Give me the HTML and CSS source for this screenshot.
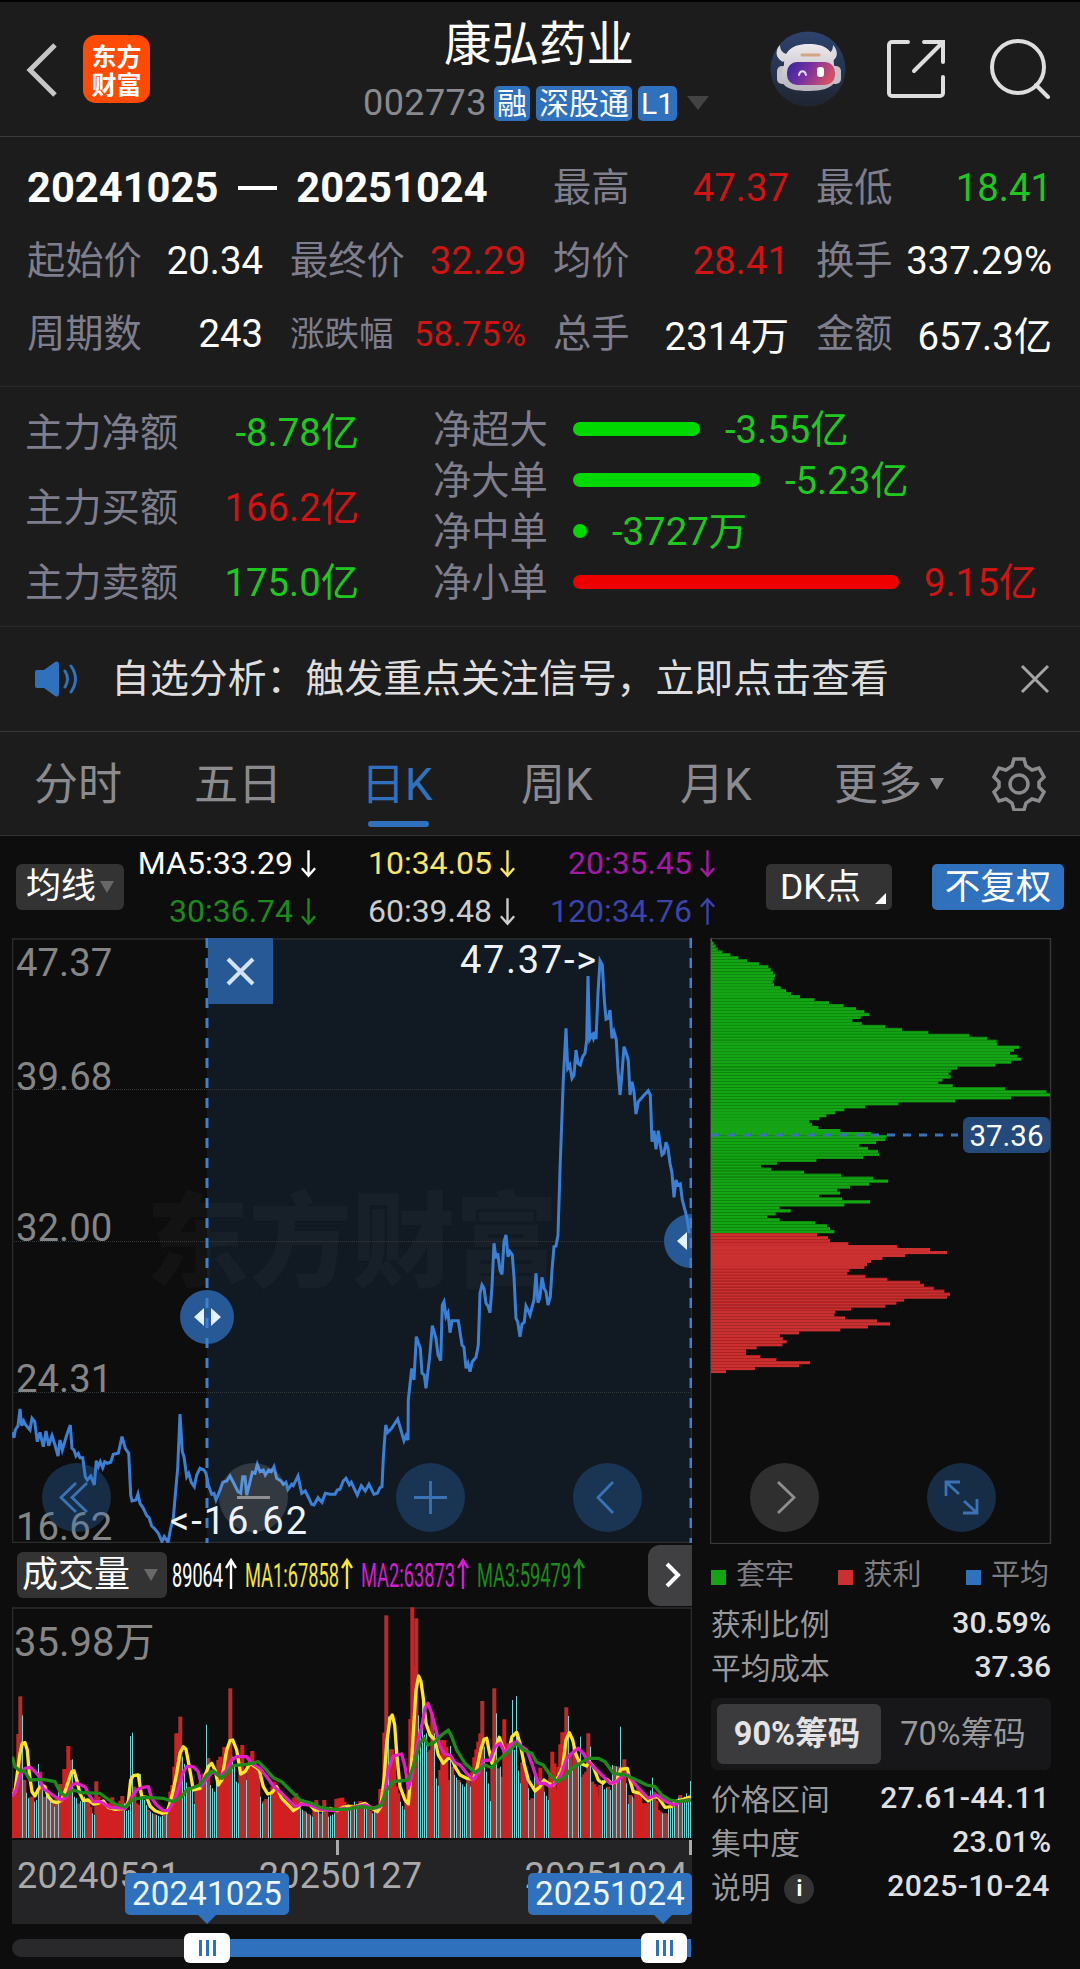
FILE: index.html
```
<!DOCTYPE html>
<html lang="zh-CN">
<head>
  <meta charset="UTF-8">
  <meta name="viewport" content="width=device-width, initial-scale=1.0">
  <title>康弘药业 002773</title>
  <link rel="stylesheet" href="styles.css">
</head>
<body>
  <svg class="sprite" aria-hidden="true">
    <symbol id="down" viewBox="0 0 18 30"><path d="M9 1v27M2 20l7 8 7-8" /></symbol>
    <symbol id="up" viewBox="0 0 18 30"><path d="M9 29V2M2 10l7-8 7 8" /></symbol>
  </svg>

  <header class="header">
    <svg class="back" viewBox="0 0 32 56"><path d="M29 3L4 28l25 25" /></svg>
    <div class="logo"><span>东方</span><span>财富</span></div>
    <div class="title">
      <h1>康弘药业</h1>
      <div class="code">
        <span>002773</span><b>融</b><b>深股通</b><b>L1</b><i class="caret"></i>
      </div>
    </div>
    <div class="actions">
      <svg class="robot" width="76" height="76" viewBox="0 0 76 76">
        <defs>
          <linearGradient id="sky" x1="0" y1="0" x2="0" y2="1"><stop offset="0" stop-color="#2e436d" /><stop offset="1" stop-color="#1f2530" /></linearGradient>
          <linearGradient id="visor" x1="0" y1="0" x2="1" y2="0.3"><stop offset="0" stop-color="#2c2a9c" /><stop offset="0.5" stop-color="#7a2fa0" /><stop offset="1" stop-color="#d05068" /></linearGradient>
          <linearGradient id="shell" x1="0" y1="0" x2="0" y2="1"><stop offset="0" stop-color="#ece9ec" /><stop offset="1" stop-color="#b9b4bd" /></linearGradient>
        </defs>
        <circle cx="38" cy="38" r="37.5" fill="url(#sky)" />
        <path class="horns" d="M10 14c-5 5-5 13 3 17l8-8c-7 1-11-3-11-9zM63 14c5 5 6 13-2 17l-9-8c8 1 11-3 11-9z" />
        <rect x="7" y="35" width="11" height="18" rx="5" fill="#c5c1ca" />
        <rect x="59" y="35" width="12" height="18" rx="5" fill="#c5c1ca" />
        <path class="helmet" d="M14 34c0-15 9-21 25-21s25 6 25 21c6 14 2 26-25 26S8 52 14 34z" />
        <rect x="17" y="31" width="48" height="23" rx="10" fill="url(#visor)" />
        <path d="M32 24h17" stroke="#d5a583" stroke-width="3" stroke-linecap="round" />
        <path d="M29 44c1-5 6-5 7 0" stroke="#e2dcff" stroke-width="2" stroke-linecap="round" />
        <rect x="47" y="36" width="7" height="10" rx="3" fill="#fff" />
      </svg>
      <svg class="line-icon" width="58" height="58" viewBox="0 0 58 58"><path d="M21 2H5a3 3 0 0 0-3 3v48a3 3 0 0 0 3 3h48a3 3 0 0 0 3-3V37M37 2h19v20M55 3L27 31" /></svg>
      <svg class="line-icon" width="60" height="60" viewBox="0 0 60 60"><circle cx="28" cy="28" r="26" /><path d="M46 46l12 12" /></svg>
    </div>
  </header>

  <section class="stats">
    <div class="range"><span>20241025</span><i></i><span>20251024</span></div>
    <div><label>最高</label><span class="red">47.37</span></div>
    <div><label>最低</label><span class="green">18.41</span></div>
    <div><label>起始价</label><span>20.34</span></div>
    <div><label>最终价</label><span class="red">32.29</span></div>
    <div><label>均价</label><span class="red">28.41</span></div>
    <div><label>换手</label><span>337.29%</span></div>
    <div><label>周期数</label><span>243</span></div>
    <div class="small"><label>涨跌幅</label><span class="red">58.75%</span></div>
    <div><label>总手</label><span>2314万</span></div>
    <div><label>金额</label><span>657.3亿</span></div>
  </section>

  <section class="flow">
    <div class="main-force">
      <div><label>主力净额</label><span class="green">-8.78亿</span></div>
      <div><label>主力买额</label><span class="red">166.2亿</span></div>
      <div><label>主力卖额</label><span class="green">175.0亿</span></div>
    </div>
    <div class="orders">
      <div><label>净超大</label><i class="bar bg-green" style="width:127px"></i><span class="green">-3.55亿</span></div>
      <div><label>净大单</label><i class="bar bg-green" style="width:187px"></i><span class="green">-5.23亿</span></div>
      <div><label>净中单</label><i class="bar bg-green" style="width:14px"></i><span class="green">-3727万</span></div>
      <div><label>净小单</label><i class="bar bg-red" style="width:326px"></i><span class="red">9.15亿</span></div>
    </div>
  </section>

  <section class="notice">
    <svg class="horn" width="46" height="36" viewBox="0 0 46 36"><path d="M1 11q0-2 2-2h7L21 1q4-2 4 3v28q0 5-4 3l-11-8H3q-2 0-2-2z" /><path class="wave" d="M31 10q5 8 0 16M37 5q9 13 0 26" /></svg>
    <p>自选分析：触发重点关注信号，立即点击查看</p>
    <svg class="close" width="30" height="30" viewBox="0 0 30 30"><path d="M2 2l26 26M28 2L2 28" /></svg>
  </section>

  <nav class="tabs">
    <a>分时</a><a>五日</a><a class="active">日K</a><a>周K</a><a>月K</a><a class="more">更多<i class="caret"></i></a>
    <svg class="gear" width="54" height="54" viewBox="0 0 54 54"><path d="M22 2h10l2 7 6 4 7-2 5 9-5 5v5l5 5-5 9-7-2-6 4-2 7H22l-2-7-6-4-7 2-5-9 5-5v-5l-5-5 5-9 7 2 6-4z" /><circle cx="27" cy="27" r="9" /></svg>
  </nav>

  <div class="ma">
    <button class="pick">均线<i class="caret"></i></button>
    <div class="ma-values">
      <span class="white">MA5:33.29<svg><use href="#down" /></svg></span>
      <span class="yellow">10:34.05<svg><use href="#down" /></svg></span>
      <span class="purple">20:35.45<svg><use href="#down" /></svg></span>
      <span class="dgreen">30:36.74<svg><use href="#down" /></svg></span>
      <span class="gray">60:39.48<svg><use href="#down" /></svg></span>
      <span class="indigo">120:34.76<svg><use href="#up" /></svg></span>
    </div>
    <button class="dk">DK点<i></i></button>
    <button class="adjust">不复权</button>
  </div>

  <main class="charts">
    <div class="left">
      <svg class="price" width="680" height="605" viewBox="12 938 680 605">
        <rect class="selected" x="207" y="938" width="485" height="605" />
        <text class="watermark" x="146" y="1279">东方财富</text>
        <path class="grid" d="M12 1089.5h680M12 1241.5h680M12 1392.5h680" />
        <path class="frame" d="M12.5 938v605M12 939h680M12 1542.5h680M691.5 938v605" />
        <g class="scale">
          <text x="16" y="976">47.37</text>
          <text x="16" y="1090">39.68</text>
          <text x="16" y="1241">32.00</text>
          <text x="16" y="1392">24.31</text>
          <text x="16" y="1540">16.62</text>
        </g>
        <circle class="handle" cx="207" cy="1317" r="27" />
        <circle class="handle" cx="691" cy="1241" r="27" />
        <polyline class="close-line" id="closeLine" />
        <path class="edge" d="M207 938v605M691 938v605" />
        <path class="tri" d="M204 1308l-10 9 10 9zM211 1308l10 9-10 9zM687 1232l-10 9 10 9z" />
        <g class="mark">
          <text x="460" y="973" textLength="136">47.37-&gt;</text>
          <text x="170" y="1534" textLength="137">&lt;-16.62</text>
        </g>
        <rect class="shut" x="208" y="938" width="65" height="66" />
        <path class="shut-x" d="M228 959l25 25M253 959l-25 25" />
        <g class="round blue">
          <circle cx="76.5" cy="1497.5" r="34.5" /><path d="M76 1483l-15 14.500 15 14.500M87 1483l-15 14.500 15 14.500" />
          <circle cx="430.500" cy="1497.500" r="34.500" /><path d="M414 1497.500h33M430.500 1481v33" />
          <circle cx="607.500" cy="1497.500" r="34.500" /><path d="M613 1482l-15 15.500 15 15.500" />
        </g>
        <g class="round plain">
          <circle cx="253.500" cy="1497.500" r="34.500" /><path d="M237 1497.500h33" />
        </g>
      </svg>

      <div class="volume-bar">
        <button class="pick">成交量<i class="caret"></i></button>
        <svg class="volume-values" width="416" height="40" viewBox="170 0 416 40">
          <text class="white" x="172" y="32" textLength="51" lengthAdjust="spacingAndGlyphs">89064</text>
          <text class="vivid" x="245" y="32" textLength="94" lengthAdjust="spacingAndGlyphs">MA1:67858</text>
          <text class="magenta" x="361" y="32" textLength="94" lengthAdjust="spacingAndGlyphs">MA2:63873</text>
          <text class="dgreen" x="477" y="32" textLength="94" lengthAdjust="spacingAndGlyphs">MA3:59479</text>
          <path class="white" d="M231 34V5M226 13l5-8 5 8" />
          <path class="vivid" d="M347 34V5M342 13l5-8 5 8" />
          <path class="magenta" d="M463 34V5M458 13l5-8 5 8" />
          <path class="dgreen" d="M579 34V5M574 13l5-8 5 8" />
        </svg>
        <button class="next"><svg width="18" height="28" viewBox="0 0 18 28"><path d="M3 3l11 11L3 25" /></svg></button>
      </div>

      <svg class="volume" width="680" height="233" viewBox="12 1607 680 233">
        <path class="frame" d="M12.500 1607v232M12 1608h680M691.500 1607v232" />
        <g id="volumeBars"></g>
        <g id="volumeLines" class="avg"></g>
        <text class="max" x="14" y="1656">35.98万</text>
      </svg>

      <div class="axis">
        <span>20240531</span><span class="center">20250127</span><span>20251024</span>
        <i class="tick mid"></i><i class="tick last"></i>
        <b class="flag from">20241025</b>
        <b class="flag to">20251024</b>
      </div>

      <div class="slider">
        <div class="fill"></div>
        <div class="knob start"><i></i><i></i><i></i></div>
        <div class="knob end"><i></i><i></i><i></i></div>
      </div>
    </div>

    <aside class="right">
      <svg class="chips" width="342" height="606" viewBox="710 938 342 606">
        <rect class="frame" x="710.500" y="938.500" width="340" height="605" />
        <g id="chipBars"></g>
        <path class="avg-line" d="M711 1135h247" />
        <rect class="avg-tag" x="963" y="1117" width="87" height="36" rx="6" />
        <text class="avg-text" x="1006.500" y="1146">37.36</text>
        <g class="round plain"><circle cx="784.500" cy="1497.500" r="34.500" /><path d="M778 1482l16 15.500-16 15.500" /></g>
        <g class="round blue"><circle cx="961.500" cy="1497.500" r="34.500" /><path d="M946 1496v-14h14M947 1483l12 11M977 1499v14h-14M976 1512l-12-11" /></g>
      </svg>
      <div class="legend">
        <span><i class="c1"></i>套牢</span><span><i class="c2"></i>获利</span><span><i class="c3"></i>平均</span>
      </div>
      <div class="row"><label>获利比例</label><b>30.59%</b></div>
      <div class="row"><label>平均成本</label><b>37.36</b></div>
      <div class="segment"><b>90%筹码</b><span>70%筹码</span></div>
      <div class="row"><label>价格区间</label><b class="wide">27.61-44.11</b></div>
      <div class="row"><label>集中度</label><b>23.01%</b></div>
      <div class="row"><label>说明<i class="info">i</i></label><b class="wide">2025-10-24</b></div>
    </aside>
  </main>
  <script src="script.js"></script>
</body>
</html>
```
FILE: styles.css
```
* {
  box-sizing: border-box;
}
body {
  margin: 0;
  width: 1080px;
  height: 1969px;
  overflow: hidden;
  background: #0d0d0d;
  color: #fff;
  font-family: Roboto, "Noto Sans CJK SC", sans-serif;
  border-top: 2px solid #000;
}
h1, p {
  margin: 0;
  font-weight: 400;
}
button {
  border: none;
  padding: 0;
  color: #fff;
  font-family: inherit;
}
i, b {
  font-style: normal;
}
path, polyline {
  fill: none;
}
.sprite {
  display: none;
}
.red { color: #d01414; }
.green { color: #1fc81f; }
.white { color: #fff; }
.yellow { color: #f8e767; }
.vivid { color: #f3e53a; }
.purple { color: #a51aa5; }
.magenta { color: #d21ed2; }
.dgreen { color: #1c8a1c; }
.gray { color: #ccc; }
.indigo { color: #3a44ac; }
.bg-green { background: #00d900; }
.bg-red { background: #ee0000; }
.caret {
  display: inline-block;
  border: 7px solid transparent;
  border-top: 12px solid #686868;
  border-bottom: 0;
}

/* header */
.header {
  height: 135px;
  display: flex;
  align-items: flex-start;
  background: #1c1c1c;
  border-bottom: 1px solid #3a3a3a;
  padding: 0 30px 0 26px;
}
.back {
  width: 32px;
  height: 56px;
  margin-top: 40px;
  stroke: #c6c6c6;
  stroke-width: 5;
}
.logo {
  width: 67px;
  height: 68px;
  margin: 33px 0 0 25px;
  border-radius: 13px;
  background: #ff4b06;
  display: flex;
  flex-direction: column;
  align-items: center;
  justify-content: center;
  font: 700 25px/28px "Noto Sans CJK SC", sans-serif;
}
.title {
  width: 350px;
  margin-left: 213px;
}
.title h1 {
  font-size: 47.5px;
  line-height: 60px;
  margin-top: 13px;
  padding-left: 81px;
}
.code {
  display: flex;
  align-items: center;
  height: 36px;
  margin-top: 10px;
  color: #8a8a8e;
  font-size: 36px;
}
.code span {
  width: 131px;
  letter-spacing: 0.4px;
}
.code b {
  font-weight: 400;
  font-size: 30px;
  line-height: 35px;
  color: #fff;
  background: #3071bd;
  border-radius: 5px;
  padding: 0 3px;
  margin-right: 6px;
}
.code .caret {
  margin-left: 4px;
  border-width: 14px 11px 0;
  border-top-color: #434343;
}
.actions {
  display: flex;
  align-items: center;
  margin: 29px 0 0 auto;
  gap: 41px;
}
.horns {
  fill: #dcd9df;
}
.helmet {
  fill: url(#shell);
}
.line-icon {
  fill: none;
  stroke: #dedede;
  stroke-width: 4;
  stroke-linecap: round;
}
.line-icon:last-child {
  margin-left: 4px;
}

/* period statistics */
.stats {
  height: 249px;
  background: #1c1c1c;
  display: grid;
  grid-template-columns: repeat(4, 236px);
  grid-auto-rows: 73px;
  column-gap: 27px;
  padding: 14px 27px 0;
  font-size: 38.3px;
}
.stats div {
  display: flex;
  justify-content: space-between;
  align-items: center;
  white-space: nowrap;
}
.stats .range {
  grid-column: span 2;
  justify-content: flex-start;
  font-size: 41.7px;
  font-weight: 700;
}
.range i {
  width: 39px;
  height: 4px;
  margin: 0 19px 0 20px;
  background: #fff;
}
.stats .small {
  font-size: 34.5px;
}
label {
  color: #7f7e8c;
}
.stats label {
  margin-top: -6px;
}

/* money flow */
.flow {
  height: 241px;
  background: #1c1c1c;
  border-top: 1px solid #2a2a2a;
  border-bottom: 1px solid #2a2a2a;
  display: flex;
  padding-left: 25px;
  font-size: 38.3px;
}
.main-force {
  width: 334px;
  padding-top: 5px;
}
.main-force div {
  height: 75px;
  display: flex;
  align-items: center;
  justify-content: space-between;
}
.orders {
  margin-left: 74px;
  padding-top: 16px;
}
.orders div {
  height: 51px;
  display: flex;
  align-items: center;
}
.orders label {
  width: 140px;
}
.orders label, .orders span {
  margin-top: -4px;
}
.bar {
  height: 14px;
  border-radius: 7px;
  margin-right: 25px;
}

/* notice */
.notice {
  height: 105px;
  background: #1c1c1c;
  display: flex;
  align-items: center;
  padding: 0 30px 0 34px;
  border-bottom: 1px solid #383838;
}
.notice p {
  margin: -8px 0 0 31px;
  font-size: 38.9px;
  color: #dedede;
  white-space: nowrap;
}
.horn path {
  fill: #3071bd;
}
.horn .wave {
  fill: none;
  stroke: #3071bd;
  stroke-width: 3;
  stroke-linecap: round;
}
.close {
  margin-left: auto;
  stroke: #a5a5a5;
  stroke-width: 3;
}

/* tabs */
.tabs {
  height: 104px;
  background: #1c1c1c;
  border-bottom: 1px solid #333;
  display: flex;
  align-items: center;
  padding: 0 34px;
  font-size: 44px;
  color: #8b8b8f;
}
.tabs a {
  width: 160px;
  padding-top: 3px;
  line-height: 100px;
  white-space: nowrap;
}
.tabs .active {
  color: #3071bd;
  position: relative;
  padding-left: 7px;
}
.tabs .active::after {
  content: "";
  position: absolute;
  left: 14px;
  bottom: 8px;
  width: 61px;
  height: 6px;
  border-radius: 3px;
  background: #3071bd;
}
.tabs a:nth-child(4) {
  padding-left: 7px;
}
.tabs a:nth-child(5) {
  padding-left: 6px;
}
.tabs .more {
  width: auto;
}
.more .caret {
  margin: 0 0 10px 8px;
  border-width: 12px 7px 0;
  border-top-color: #8b8b8f;
}
.gear {
  margin-left: auto;
  fill: none;
  stroke: #8b8b8f;
  stroke-width: 3.5;
}

/* moving averages */
.ma {
  height: 102px;
  display: flex;
  align-items: center;
  padding-left: 16px;
}
.pick {
  height: 46px;
  width: 108px;
  background: #333;
  border-radius: 6px;
  font-size: 35px;
  line-height: 44px;
  display: flex;
  align-items: center;
  justify-content: center;
  gap: 4px;
}
.ma-values {
  display: grid;
  grid-template-columns: 193px 199px 200px;
  grid-auto-rows: 48px;
  font-size: 32px;
}
.ma-values span {
  display: flex;
  align-items: center;
  justify-content: flex-end;
}
.ma-values svg {
  width: 17px;
  height: 29px;
  margin-left: 7px;
  stroke: currentColor;
  stroke-width: 2.5;
}
.dk, .adjust {
  height: 46px;
  border-radius: 5px;
  line-height: 44px;
}
.dk {
  width: 126px;
  margin-left: 50px;
  background: #333;
  padding-right: 17px;
  font-size: 35.5px;
  position: relative;
}
.dk i {
  position: absolute;
  right: 6px;
  bottom: 6px;
  border-left: 11px solid transparent;
  border-bottom: 11px solid #fff;
}
.adjust {
  width: 132px;
  margin-left: 40px;
  background: #3071bd;
  font-size: 35.5px;
}

/* charts */
.charts {
  display: flex;
  padding-left: 12px;
  gap: 18px;
}
.left {
  width: 680px;
}
.right {
  width: 342px;
}
.charts svg {
  display: block;
}
.frame {
  fill: none;
  stroke: #2b2c2e;
  stroke-width: 1.5;
}
.chips .frame {
  stroke: #363636;
}
.selected {
  fill: #111922;
}
.watermark {
  font-size: 103px;
  font-weight: 900;
  fill: rgba(255, 255, 255, 0.028);
}
.grid {
  stroke: #33383d;
  stroke-dasharray: 1 1;
}
.scale {
  font-size: 38.3px;
  fill: #858585;
}
.handle {
  fill: #275997;
}
.close-line {
  stroke: #3c80d6;
  stroke-width: 3;
}
.edge {
  stroke: #3f7fcc;
  stroke-width: 3;
  stroke-dasharray: 10 10;
}
.tri {
  fill: #e4f1ff;
}
.mark {
  font-size: 38px;
  fill: #edf2fb;
}
.shut {
  fill: #275997;
}
.shut-x {
  stroke: #d3e2f6;
  stroke-width: 4;
}
.round path {
  stroke-width: 2.8;
}
.blue circle {
  fill: rgba(48, 113, 189, 0.32);
}
.blue path {
  stroke: #3a73b5;
}
.plain circle {
  fill: rgba(255, 255, 255, 0.14);
}
.plain path {
  stroke: #8f8f92;
}

/* volume */
.volume-bar {
  height: 64px;
  display: flex;
  align-items: center;
  padding-left: 5px;
}
.volume-bar .pick {
  width: 150px;
  font-size: 36px;
  gap: 14px;
  padding-right: 4px;
}
.volume-values {
  margin-left: 3px;
  font-size: 33px;
}
.volume-values text {
  fill: currentColor;
}
.volume-values path {
  stroke: currentColor;
  stroke-width: 2.4;
}
.next {
  width: 44px;
  height: 61px;
  margin-left: auto;
  padding-left: 16px;
  background: #404042;
  border-radius: 12px 0 0 12px;
}
.next path {
  stroke: #fff;
  stroke-width: 4;
}
.max {
  font-size: 40px;
  fill: #858585;
}
.up { fill: #d22020; }
.up-edge { fill: #b03030; }
.fall { fill: #70d6d6; }
.avg polyline {
  stroke-width: 3.3;
  stroke-linejoin: round;
}
.axis {
  position: relative;
  height: 84px;
  background: #242426;
  display: flex;
  justify-content: space-between;
  padding: 15px 4px 0 5px;
  font-size: 36px;
  letter-spacing: 0.2px;
  color: #aaa;
}
.axis .center {
  margin-right: 24px;
}
.tick {
  position: absolute;
  top: 0;
  width: 3px;
  height: 15px;
  background: #aaa;
}
.tick.mid {
  left: 324px;
}
.tick.last {
  right: 0;
}
.flag {
  position: absolute;
  top: 33px;
  width: 164px;
  height: 42px;
  border-radius: 5px;
  background: #3071bd;
  color: #eef6ff;
  font-size: 33px;
  font-weight: 400;
  line-height: 41px;
  text-align: center;
}
.flag::after {
  content: "";
  position: absolute;
  top: 42px;
  left: 73px;
  border: 9px solid transparent;
  border-top-color: #3071bd;
  border-bottom: 0;
}
.from {
  left: 113px;
}
.to {
  right: 0;
}
.to::after {
  left: 126px;
}
.slider {
  position: relative;
  height: 18px;
  margin-top: 15px;
  border-radius: 9px;
  background: #29292b;
}
.fill {
  height: 18px;
  margin: 0 1px 0 195px;
  background: #3071bd;
}
.knob {
  position: absolute;
  top: -6px;
  width: 46px;
  height: 30px;
  border-radius: 6px;
  background: #fff;
  display: flex;
  align-items: center;
  justify-content: center;
  gap: 4px;
}
.knob i {
  width: 3px;
  height: 16px;
  background: #3071bd;
}
.start {
  left: 172px;
}
.end {
  left: 629px;
}

/* chip distribution */
.trapped { fill: #14a514; }
.trapped-line { fill: #0c860c; }
.profit { fill: #ca3030; }
.profit-line { fill: #ad2020; }
.avg-line {
  stroke: #3a73b5;
  stroke-width: 3;
  stroke-dasharray: 8 8;
}
.avg-tag {
  fill: #234a7a;
}
.avg-text {
  font-size: 29.5px;
  fill: #fff;
  text-anchor: middle;
}
.legend {
  height: 56px;
  padding: 0 3px 0 1px;
  display: flex;
  justify-content: space-between;
  align-items: center;
  font-size: 29px;
  color: #7e7e82;
}
.legend i {
  display: inline-block;
  width: 15px;
  height: 15px;
  margin-right: 10px;
}
.c1 { background: #14a514; }
.c2 { background: #ca3030; }
.c3 { background: #3071bd; }
.row {
  height: 44px;
  display: flex;
  justify-content: space-between;
  align-items: center;
  padding: 0 1px;
  font-size: 30px;
}
.row label {
  font-size: 29.7px;
  color: #99999c;
}
.row b {
  font-weight: 500;
  color: #e0e0e0;
}
.row .wide {
  letter-spacing: 0.6px;
}
.row .wide:nth-child(2) {
  margin-right: 1px;
}
.segment {
  height: 72px;
  margin: 10px 1px 5px;
  padding: 6px;
  display: flex;
  border-radius: 6px;
  background: #171719;
  font-size: 32.5px;
  line-height: 60px;
  text-align: center;
}
.segment b {
  width: 164px;
  padding-right: 4px;
  border-radius: 6px;
  background: #3b3b3d;
  color: #e4e4e4;
}
.segment span {
  flex: 1;
  color: #99999c;
}
.info {
  display: inline-block;
  width: 30px;
  height: 30px;
  margin-left: 14px;
  border-radius: 50%;
  background: #333;
  color: #fff;
  font-size: 22px;
  font-weight: 700;
  line-height: 30px;
  text-align: center;
  vertical-align: 2px;
}
```
FILE: script.js
```
const SVG = 'http://www.w3.org/2000/svg';

function add(parent, name, attrs) {
  const el = document.createElementNS(SVG, name);
  for (const key in attrs) el.setAttribute(key, attrs[key]);
  parent.appendChild(el);
  return el;
}

// "x,y x,y" in thirds of a pixel, moved to the chart's origin
function toPoints(text, x0, y0) {
  return text.split(' ').map((pair) => {
    const [x, y] = pair.split(',').map(Number);
    return (x0 + x / 3).toFixed(1) + ',' + (y0 + y / 3).toFixed(1);
  }).join(' ');
}

// Closing price
const closeA = '37,112 42,128 46,105 54,92 60,42 65,92 71,78 77,90 90,105 96,70 104,80 112,140 120,112 130,155 138,108 146,152 156,122 165,150 174,183 180,135 187,165 200,120 211,90 216,160 222,165 228,183 235,175 240,188 248,188 256,245 262,255 272,243 283,270 289,197 295,215 301,200 308,218 314,200 322,205 332,202 340,178 355,175 366,125 376,160 386,175 392,300 396,318 408,315 414,297 420,325 430,340 440,362 447,368 455,393 463,400 475,415 486,440 493,425 504,442 512,400 520,370 526,300 533,220 540,57 547,170 552,185 560,245 566,235 574,262 583,275 590,240 600,220 612,225 618,235 625,270 635,298 642,295 648,315 660,285 668,262 680,258 690,243 700,262 714,290 722,295 728,245 735,245 740,300 748,270 757,232 765,235 772,208 780,230 790,225 796,240 806,225 814,230 822,215 830,250 843,258 850,268 858,262 864,283 875,268 880,272 894,243 905,295 916,288 922,300 935,328 942,330 954,308 966,322 976,295 990,298 1005,298 1012,285 1020,283 1030,258 1038,250 1048,270 1054,262 1072,300 1084,272 1096,288 1107,268 1122,298 1132,295 1140,278 1146,275 1150,190 1157,90 1163,112 1175,100 1193,72 1212,137 1218,122 1224,135';
const closeB = '25,1380 35,1285 42,1320 49,1190 61,1225 66,1300 73,1305 78,1345 90,1240 97,1157 108,1195 114,1245 122,1262 127,1095 132,1085 138,1130 144,1118 150,1178 156,1142 175,1142 186,1215 192,1222 198,1285 204,1270 210,1295 217,1265 228,1252 235,1215 240,1060 246,1035 252,1045 258,1090 264,1098 270,1118 276,1040 282,910 288,955 293,940 300,990 306,1003 312,905 318,885 324,950 330,935 337,945 342,1010 348,1135 353,1145 360,1190 366,1152 373,1147 378,1098 384,1110 390,1125 402,1080 408,1000 414,1088 420,1070 426,1012 432,1045 438,1055 444,1095 451,1070 456,990 462,920 468,918 474,885 480,690 490,420 498,265 503,385 509,375 516,415 522,405 528,330 534,370 541,375 548,350 555,340 560,300 564,108 569,298 576,285 580,295 584,275 588,298 594,160 600,62 607,75 613,180 618,238 625,235 630,210 636,295 642,275 649,300 654,390 660,465 666,400 672,320 679,340 685,360 690,465 696,425 702,455 708,522 715,485 730,468 745,452 751,465 756,605 762,572 768,628 775,572 780,610 786,645 792,640 798,607 804,625 810,670 816,700 822,772 828,720 834,735 841,732 847,780 855,810 861,835 868,880';
document.getElementById('closeLine').setAttribute('points', toPoints(closeA, 0, 1395) + ' ' + toPoints(closeB, 400, 940));

// Volume: bar index and top, values between are interpolated
const tops = '0:580 2:550 3:402 4:289 5:346 6:540 7:578 8:595 10:590 11:605 12:600 13:492 14:515 15:560 16:590 18:575 20:610 21:620 24:552 25:590 26:507 27:507 28:438 29:480 30:478 31:590 32:595 33:610 36:590 38:600 40:640 41:645 42:544 43:590 45:610 48:625 50:592 52:630 55:588 57:632 58:630 59:408 60:398 61:560 62:610 63:615 64:522 65:590 66:600 68:630 70:640 74:650 78:640 79:575 80:555 81:500 82:400 83:400 84:350 85:470 86:492 87:548 88:560 90:570 91:612 92:560 95:540 96:520 97:374 98:474 99:555 101:575 103:480 104:470 105:500 106:441 107:470 108:440 109:265 110:470 111:500 112:545 113:550 114:500 115:435 116:520 117:540 118:490 120:453 121:490 123:520 124:590 125:610 128:590 131:545 134:600 136:600 138:630 142:580 144:625 150:650 152:600 154:640 156:600 158:650 161:640 162:597 165:593 168:630 171:605 173:620 174:603 176:610 180:640 183:620 184:567 185:567 186:398 187:46 188:350 189:448 190:448 191:465 192:560 193:580 194:605 195:618 196:628 198:560 199:357 200:22 201:200 202:55 203:346 204:375 205:300 206:405 207:400 208:455 209:450 210:340 211:400 212:535 213:557 214:510 215:420 216:420 217:440 218:540 219:438 220:500 221:525 223:540 226:560 228:540 229:560 231:472 233:425 234:400 235:303 236:440 237:515 238:550 239:603 240:500 241:265 242:340 243:505 244:500 245:530 246:358 247:430 248:470 249:440 250:300 251:450 252:288 253:512 254:550 255:487 257:515 258:565 259:600 260:595 261:515 263:560 264:503 266:575 268:600 270:455 271:490 272:570 273:500 274:433 275:397 276:397 277:322 278:348 279:460 280:512 281:440 283:480 284:410 285:530 287:515 288:400 289:440 290:545 292:560 293:590 294:555 295:540 296:568 298:560 299:570 300:495 301:498 303:500 304:380 305:500 306:478 307:550 308:612 309:585 311:595 313:565 315:610 318:610 320:533 321:575 323:630 325:640 327:640 329:615 332:600 334:585 335:600 337:580 338:590 339:543'
  .split(' ').map((p) => p.split(':').map(Number));
const falls = new Set([5, 7, 8, 11, 12, 13, 15, 17, 19, 21, 23, 30, 31, 32, 34, 35, 36, 40, 41, 56, 57, 58, 59, 60, 64, 65, 66, 67, 69, 70, 72, 73, 74, 75, 77, 85, 86, 87, 89, 90, 91, 97, 99, 100, 101, 102, 110, 111, 112, 113, 117, 124, 125, 128, 129, 144, 145, 147, 149, 150, 153, 155, 158, 159, 160, 161, 168, 169, 171, 172, 176, 177, 180, 181, 188, 194, 195, 196, 203, 204, 205, 206, 207, 211, 212, 213, 219, 221, 222, 224, 225, 226, 227, 229, 236, 237, 238, 239, 242, 244, 250, 251, 252, 253, 254, 258, 261, 266, 267, 268, 278, 280, 283, 284, 289, 295, 296, 297, 299, 300, 302, 304, 307, 308, 310, 319, 320, 325, 328, 329, 330, 331, 333, 335, 336, 337, 338, 339]);

const bars = document.getElementById('volumeBars');
const values = [];
for (let i = 0, t = 0; i < 340; i++) {
  while (t < tops.length - 2 && tops[t + 1][0] <= i) t++;
  const [a, b] = [tops[t], tops[t + 1]];
  values.push(a[1] + (b[1] - a[1]) * (i - a[0]) / (b[0] - a[0]));
}
// rising bars are wide and overlap, falling ones are thin lines on top
values.forEach((top, i) => {
  if (falls.has(i)) return;
  const lone = falls.has(i - 1) || falls.has(i + 1);
  const h = (714 - top) / 3;
  add(bars, 'rect', { class: lone ? 'up-edge' : 'up', x: 10.3 + i * 2, y: 1838 - h, width: 4, height: h });
});
values.forEach((top, i) => {
  if (!falls.has(i)) return;
  const h = (714 - top) / 3;
  add(bars, 'rect', { class: 'fall', x: 12 + i * 2, y: 1838 - h, width: 1, height: h });
});

// Volume moving averages
const averages = [
  ['#ffe62a',
    '37,585 45,575 52,520 60,460 67,430 75,428 82,450 88,520 96,575 105,588 115,568 125,555 135,560 145,590 158,605 172,608 185,600 195,575 205,545 215,515 222,512 230,540 240,580 250,602 265,600 280,612 295,610 310,603 325,622 345,628 375,625 385,605 392,540 400,527 415,525 425,590 440,592 450,618 465,632 485,640 500,638 510,610 520,570 530,520 540,460 550,440 558,448 568,500 580,570 600,565 612,535 625,500 635,490 645,510 655,555 665,540 680,450 690,422 698,420 710,450 722,522 735,515 750,490 765,500 778,510 790,560 803,582 815,578 830,560 845,595 860,610 880,632 895,622 910,605 930,615 945,630 970,630 990,625 1010,632 1030,622 1045,618',
    '40,622 60,615 75,610 95,625 112,635 122,620 132,540 140,430 150,355 157,345 164,375 170,460 180,560 195,600 205,612 212,530 220,400 228,270 236,228 243,245 250,295 258,370 270,405 285,420 295,465 310,490 325,475 335,475 345,500 360,525 380,535 400,538 412,500 422,450 432,418 440,415 448,455 456,490 465,450 478,412 488,440 496,462 508,445 516,410 530,397 540,430 552,490 565,540 585,573 600,560 612,540 625,550 640,555 655,530 668,500 678,420 688,398 698,420 708,465 720,490 740,498 748,485 760,500 775,540 788,550 800,538 815,550 830,545 842,508 862,505 870,540 880,575 900,580 925,603 940,590 955,592 975,622 995,620 1005,605 1030,598 1052,590'],
  ['#e01fc4',
    '37,590 48,570 60,525 75,505 92,502 105,515 118,530 128,565 145,575 165,590 185,600 200,590 215,555 230,550 255,560 265,580 280,605 300,605 330,622 375,625 385,615 395,590 410,570 430,562 445,560 455,595 470,615 490,632 505,632 520,605 535,570 548,520 560,500 580,500 595,515 605,558 625,530 640,515 660,530 680,510 695,480 710,470 740,470 755,490 780,505 800,530 820,558 845,580 865,600 885,620 905,612 930,615 960,628 1000,632 1035,625',
    '20,628 50,620 75,615 100,625 120,620 132,590 145,510 160,468 185,462 195,500 205,565 215,530 230,440 245,380 255,325 264,310 275,340 288,390 300,440 315,462 330,465 345,488 360,495 380,520 400,540 415,520 430,482 450,480 465,440 480,430 495,460 510,435 530,425 545,440 560,450 575,490 595,550 615,550 630,560 650,545 665,520 680,475 695,460 715,445 730,460 745,485 765,505 785,525 810,550 830,545 850,525 865,525 880,545 900,570 925,595 950,585 970,600 1000,615 1020,605 1052,598'],
  ['#1f8a1a',
    '37,470 45,500 60,512 75,515 90,540 130,538 165,545 180,575 195,588 220,570 245,578 300,580 320,595 345,612 375,622 400,597 440,592 490,595 520,605 545,590 560,570 600,555 620,525 640,512 665,535 700,497 740,493 775,485 795,505 820,533 845,545 870,570 900,600 935,610 960,622 1000,628 1035,628',
    '20,628 60,620 100,625 125,615 140,570 160,545 205,540 220,500 240,430 252,415 265,435 285,425 305,405 325,390 335,410 350,450 375,490 405,518 435,495 455,503 475,480 500,460 530,430 550,450 575,460 590,487 610,495 630,525 652,545 675,530 695,505 720,490 745,475 775,475 795,485 820,520 855,525 890,540 920,555 945,560 965,585 990,600 1015,605 1052,600'],
];
averages.forEach(([color, first, second]) => {
  add(document.getElementById('volumeLines'), 'polyline', {
    stroke: color,
    points: toPoints(first, 0, 1600) + ' ' + toPoints(second, 340, 1600),
  });
});

// Chip distribution, one row per price step
const trapped = [66, 71, 77, 83, 97, 121, 145, 171, 208, 235, 242, 249, 255, 253, 248, 252, 272, 288, 303, 330, 373, 417, 461, 498, 523, 538, 512, 487, 515, 586, 636, 715, 838, 892, 920, 922, 988, 972, 960, 982, 993, 963, 916, 802, 782, 776, 782, 757, 745, 788, 946, 1069, 1080, 963, 796, 625, 526, 463, 436, 409, 388, 358, 366, 385, 451, 544, 590, 586, 558, 508, 534, 564, 567, 519, 379, 261, 213, 243, 342, 453, 549, 594, 538, 480, 442, 450, 387, 456, 540, 463, 269, 302, 257, 232, 269, 376, 411, 420, 433];
const profit = [381, 414, 420, 475, 622, 720, 771, 645, 577, 543, 531, 523, 478, 472, 526, 592, 690, 702, 731, 763, 780, 771, 642, 619, 586, 483, 436, 433, 465, 561, 600, 534, 451, 327, 270, 278, 290, 277, 200, 168, 168, 211, 259, 360, 327, 195, 108];
const chips = document.getElementById('chipBars');
trapped.concat(profit).forEach((end, i) => {
  const type = i < trapped.length ? 'trapped' : 'profit';
  const y = 938.6 + i * 2.975;
  const width = (end - 63) / 3;
  add(chips, 'rect', { class: type, x: 711, y: y, width: width, height: 3.1 });
  if ((i + 3) % 22.7 < 15) {
    add(chips, 'rect', { class: type + '-line', x: 711, y: Math.round(y), width: width, height: 0.8 });
  }
});
```
